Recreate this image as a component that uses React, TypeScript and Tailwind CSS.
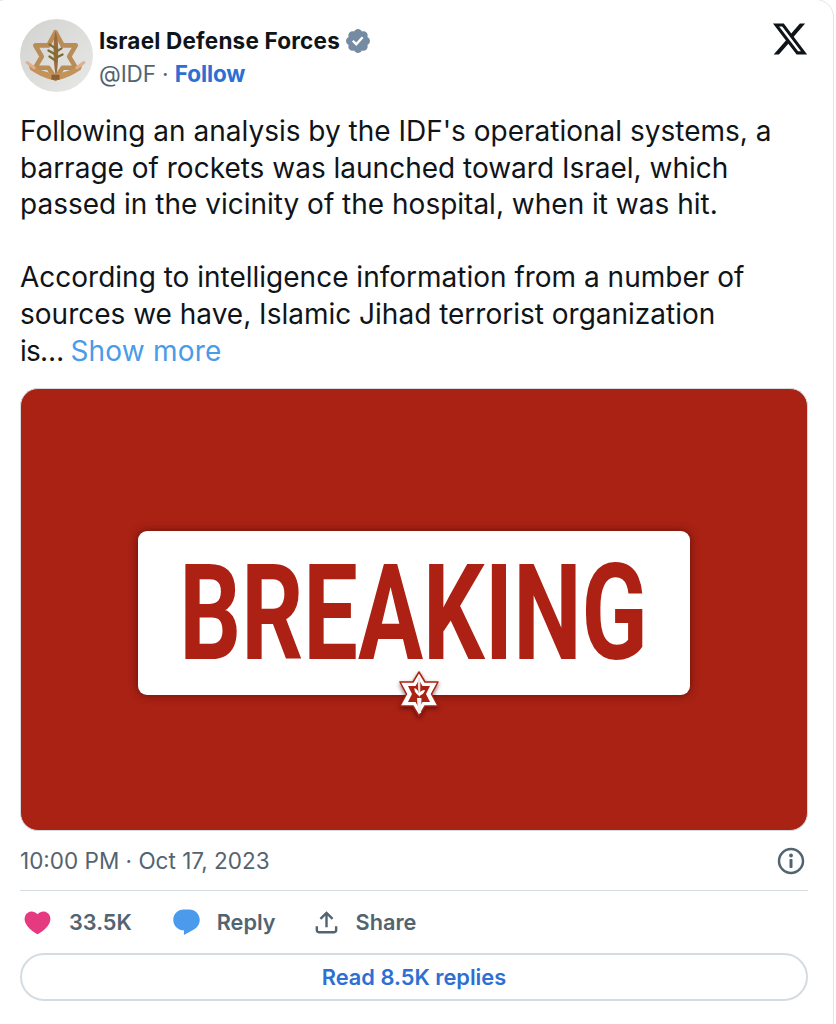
const Emblem = () => (
  <svg viewBox="0 0 72 72" className="w-[73px] h-[73px]">
    <path d="M35 13 L42 26 L55 26 L48.5 37 L55 48 L42 48 L35 59 L28 48 L15 48 L21.5 37 L15 26 L28 26 Z" fill="none" stroke="#b98d55" strokeWidth="4.5" strokeLinejoin="round" />
    <path d="M35 12 C39 20 38 46 35.5 57 C33 46 32 22 35 12 Z" fill="#9c6a3c" />
    <path d="M35 29 L29 25 M35 35 L28 31 M35 41 L29 37 M36 32 L41 29 M36 38 L42 35" stroke="#7f6a30" strokeWidth="2.2" strokeLinecap="round" />
    <path d="M8 44 C18 50 26 53 35 54 C44 53 52 50 62 44 L60 50 C50 56 43 60 35 60 C27 60 20 56 10 50 Z" fill="#c4935a" />
    <path d="M14 48 L7 43 M56 48 L63 43" stroke="#e0b08c" strokeWidth="3" strokeLinecap="round" />
    <path d="M31 55 H39 V60 H31 Z" fill="#8a5f34" />
  </svg>
);

const BreakingStar = () => (
  <svg viewBox="0 0 40 46" className="w-[40px] h-[46px]">
    <path d="M20 1 L26 11 L39 11 L32.5 23 L39 35 L26 35 L20 45 L14 35 L1 35 L7.5 23 L1 11 L14 11 Z" fill="#ffffff" stroke="#a92214" strokeWidth="1.5" strokeLinejoin="round" />
    <path d="M20 9 L23.5 15 L31 15 L27 23 L31 31 L23.5 31 L20 37 L16.5 31 L9 31 L13 23 L9 15 L16.5 15 Z" fill="#a92214" />
    <path d="M20 5 C22 10 21.5 20 20.5 27 C19 20 18 11 20 5 Z" fill="#f4dcd8" />
    <path d="M19 24 C16 22 15 19 15.5 17 C18 18 19.5 20 20 23 C21 20 23 19 26 19 C25.5 22 23 24 20 25 Z" fill="#ffffff" />
    <path d="M18 27 H22.5 L22 42 H19 Z" fill="#f1f1f1" />
  </svg>
);

export default function App() {
  return (
    <div className="w-[836px] h-[1024px] bg-white font-['Inter',sans-serif] overflow-hidden">
      <div className="-ml-[12px] w-[846px] h-[1040px] -mt-[1px] border border-[#dfe5e9] rounded-[18px] pl-[31px] pr-[25px] pt-[19px]">
        {/* header */}
        <div className="flex items-start h-[73px]">
          <div className="w-[73px] h-[73px] rounded-full bg-gradient-to-br from-[#d2d2d0] to-[#e8e8e6] flex items-center justify-center shrink-0">
            <Emblem />
          </div>
          <div className="ml-[6px] mt-[5px] flex-1">
            <div className="flex items-center h-[34px]">
              <span className="text-[22.5px] font-bold tracking-[0.2px] text-[#0f1419]">Israel Defense Forces</span>
              <svg viewBox="0 0 24 24" className="w-[28px] h-[28px] ml-[4px]" fill="#758aa3">
                <path d="M22.25 12c0-1.43-.88-2.67-2.19-3.34.46-1.39.2-2.9-.81-3.91s-2.52-1.27-3.91-.81c-.66-1.31-1.91-2.19-3.34-2.19s-2.67.88-3.33 2.19c-1.4-.46-2.91-.2-3.92.81s-1.26 2.52-.8 3.91c-1.31.67-2.2 1.91-2.2 3.34s.89 2.67 2.2 3.34c-.46 1.39-.21 2.9.8 3.91s2.52 1.26 3.91.81c.67 1.31 1.91 2.19 3.34 2.19s2.68-.88 3.34-2.19c1.39.45 2.9.2 3.91-.81s1.27-2.52.81-3.91c1.31-.67 2.19-1.91 2.19-3.34zm-11.71 4.2L6.8 12.46l1.41-1.42 2.26 2.26 4.8-5.23 1.47 1.36-6.2 6.77z" />
              </svg>
            </div>
            <div className="text-[22.5px] leading-[32px] tracking-[-0.1px] text-[#536471]">
              @IDF · <span className="font-bold text-[#2d6fd2]">Follow</span>
            </div>
          </div>
          <svg viewBox="0 0 24 24" className="w-[38px] h-[38px] mt-[1px] mr-[-1px]" fill="#0f1419">
            <path d="M18.244 2.25h3.308l-7.227 8.26 8.502 11.24H16.17l-5.214-6.817L4.99 21.75H1.68l7.73-8.835L1.254 2.25H8.08l4.713 6.231zm-1.161 17.52h1.833L7.084 4.126H5.117z" />
          </svg>
        </div>

        {/* tweet text */}
        <p className="mt-[21px] text-[28px] leading-[36.6px] text-[#0f1419]">
          Following an analysis by the IDF's operational systems, a<br />
          barrage of rockets was launched toward Israel, which<br />
          passed in the vicinity of the hospital, when it was hit.<br />
          <br />
          According to intelligence information from a number of<br />
          sources we have, Islamic Jihad terrorist organization<br />
          <span className="tracking-[-0.8px]">is… </span><span className="text-[#4a9be8] tracking-[0.2px]">Show more</span>
        </p>

        {/* media */}
        <div className="mt-[18.5px] h-[443.5px] rounded-[18px] bg-[#a92214] border border-[#d5dce1] flex items-center justify-center overflow-hidden">
          <div className="relative w-[552px] h-[164px] mt-[8px] rounded-[9px] bg-white flex items-center justify-center shadow-[0_0_8px_rgba(70,10,5,0.7)]">
            <span className="inline-block whitespace-nowrap mt-[2px] scale-x-[0.724] font-['Roboto',sans-serif] font-bold text-[134px] leading-none text-[#ad2114]">
              BREAKING
            </span>
            <div className="absolute left-[261px] -bottom-[22px] drop-shadow-[0_2px_2px_rgba(60,0,0,0.6)]">
              <BreakingStar />
            </div>
          </div>
        </div>

        {/* time */}
        <div className="flex items-center justify-between h-[60px] border-b border-[#d5dce1]">
          <span className="text-[22.5px] text-[#536471]">10:00 PM · Oct 17, 2023</span>
          <svg viewBox="0 0 28 28" className="w-[28px] h-[28px] mr-[3px]" fill="none">
            <circle cx="14" cy="14" r="12" stroke="#536471" strokeWidth="2.5" />
            <circle cx="14" cy="8.5" r="1.9" fill="#536471" />
            <rect x="12.5" y="12" width="3" height="9" rx="0.8" fill="#536471" />
          </svg>
        </div>

        {/* actions */}
        <div className="flex items-center h-[62px] text-[21.7px] font-semibold text-[#536471]">
          <svg viewBox="0 0 24 24" className="w-[31px] h-[31px] ml-[2px]" fill="#e63a80">
            <path d="M20.884 13.19c-1.351 2.48-4.001 5.12-8.379 7.67l-.503.3-.504-.3c-4.379-2.55-7.029-5.19-8.382-7.67-1.36-2.5-1.41-4.86-.514-6.67.887-1.79 2.647-2.91 4.601-3.01 1.651-.09 3.368.56 4.798 2.01 1.429-1.45 3.146-2.1 4.796-2.01 1.954.1 3.714 1.22 4.601 3.01.896 1.81.846 4.17-.514 6.67z" />
          </svg>
          <span className="ml-[16px]">33.5K</span>
          <svg viewBox="0 0 24 24" className="w-[31px] h-[31px] ml-[39px]" fill="#4a9bec">
            <path d="M1.751 10c0-4.42 3.584-8 8.005-8h4.366c4.49 0 8.129 3.64 8.129 8.13 0 2.96-1.607 5.68-4.196 7.11l-8.054 4.46v-3.69h-.067c-4.49.1-8.183-3.51-8.183-8.01z" />
          </svg>
          <span className="ml-[15px]">Reply</span>
          <svg viewBox="0 0 24 24" className="w-[29px] h-[29px] ml-[36px]" fill="#536471">
            <path d="M12 2.59l5.7 5.7-1.41 1.42L13 6.41V16h-2V6.41l-3.3 3.3-1.41-1.42L12 2.59zM21 15l-.02 3.51c0 1.38-1.12 2.49-2.5 2.49H5.5C4.11 21 3 19.88 3 18.5V15h2v3.5c0 .28.22.5.5.5h12.98c.28 0 .5-.22.5-.5L19 15h2z" />
          </svg>
          <span className="ml-[15px]">Share</span>
        </div>

        {/* replies */}
        <div className="h-[48px] rounded-full border-2 border-[#d5dce1] flex items-center justify-center text-[21.8px] font-semibold text-[#2d6fd2]">
          Read 8.5K replies
        </div>
      </div>
    </div>
  );
}
